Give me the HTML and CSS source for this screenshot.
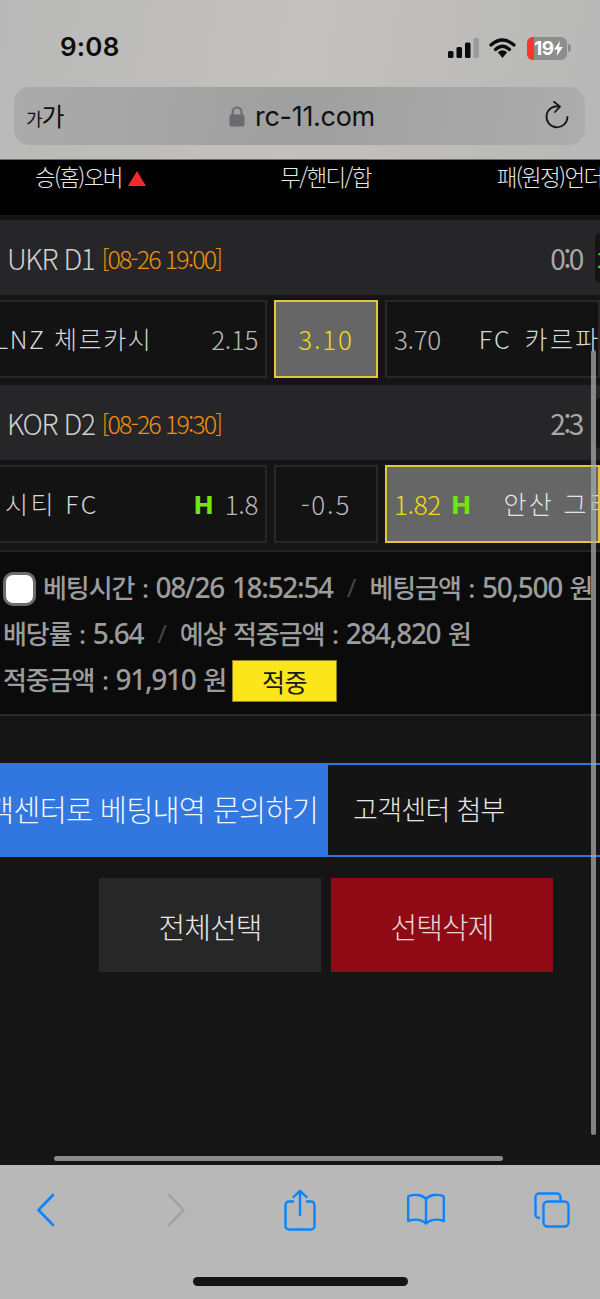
FILE: index.html
```html
<!DOCTYPE html>
<html lang="ko">
<head>
<meta charset="utf-8">
<title>rc-11.com</title>
<link rel="stylesheet" href="styles.css">
</head>
<body>
<div class="phone">
  <header class="top">
    <div class="status">
      <span class="clock">9:08</span>
      <div class="status-icons">
        <svg class="sig" width="31" height="20" viewBox="0 0 31 20"><rect x="0" y="13" width="5.5" height="7" rx="1.5" fill="#0a0a0a"/><rect x="8.5" y="9" width="5.5" height="11" rx="1.5" fill="#0a0a0a"/><rect x="17" y="4.5" width="5.5" height="15.5" rx="1.5" fill="#0a0a0a"/><rect x="25.5" y="0" width="5.5" height="20" rx="1.5" fill="#9b9b9b"/></svg>
        <svg class="wifi" width="27" height="20" viewBox="0 0 27 20"><path d="M2 7 Q13.5 -3 25 7" fill="none" stroke="#0a0a0a" stroke-width="3.2" stroke-linecap="round"/><path d="M6.5 11.5 Q13.5 5 20.5 11.5" fill="none" stroke="#0a0a0a" stroke-width="3.2" stroke-linecap="round"/><path d="M8.8 14.2 L13.5 20 L18.2 14.2 Q13.5 10.3 8.8 14.2Z" fill="#0a0a0a"/></svg>
        <div class="battery"><span class="charge"></span><span class="pct">19</span><svg class="bolt" width="9" height="15" viewBox="0 0 9 15"><path d="M6 0 L0 8.5 H3.6 L2.6 15 L9 6 H5 Z" fill="#fff"/></svg></div>
        <span class="nub"></span>
      </div>
    </div>
    <div class="urlbar">
      <span class="aa"><small>가</small>가</span>
      <div class="url">
        <svg width="16" height="21" viewBox="0 0 16 21"><path d="M3.5 9 V6 a4.5 4.5 0 0 1 9 0 V9" fill="none" stroke="#6b6b70" stroke-width="2"/><rect x="0.5" y="8.5" width="15" height="12" rx="2" fill="#6b6b70"/></svg>
        <span>rc-11.com</span>
      </div>
      <svg class="reload" width="26" height="30" viewBox="0 0 26 30"><path d="M15.5 5.6 A10.5 10.5 0 1 0 23.5 16" fill="none" stroke="#151515" stroke-width="1.8" stroke-linecap="round"/><path d="M10 0.8 L16 5.6 L11 11" fill="none" stroke="#151515" stroke-width="1.8" stroke-linecap="round" stroke-linejoin="round"/></svg>
    </div>
  </header>

  <main class="web">
    <div class="headrow">
      <span class="hd hd-home">승(홈)오버 <i class="tri"></i></span>
      <span class="hd hd-draw">무/핸디/합</span>
      <span class="hd hd-away">패(원정)언더</span>
    </div>

    <div class="league">
      <span class="lname">UKR D1</span><span class="ltime">[08-26 19:00]</span>
      <span class="score">0:0</span><span class="tag"><b>2</b></span>
    </div>
    <div class="bets">
      <div class="box b-home"><span class="team tight">LNZ 체르카시</span><span class="odd">2.15</span></div>
      <div class="box b-mid on"><span class="val">3.10</span></div>
      <div class="box b-away"><span class="odd">3.70</span><span class="team far">FC 카르파티</span></div>
    </div>

    <div class="league second">
      <span class="lname">KOR D2</span><span class="ltime">[08-26 19:30]</span>
      <span class="score">2:3</span><span class="tag"></span>
    </div>
    <div class="bets">
      <div class="box b-home"><span class="team shift">시티 FC</span><span class="h">H</span><span class="odd">1.8</span></div>
      <div class="box b-mid"><span class="val">-0.5</span></div>
      <div class="box b-away on"><span class="odd">1.82</span><span class="h after">H</span><span class="team near">안산 그리너스</span></div>
    </div>

    <section class="info">
      <p class="line"><span class="check"></span>베팅시간 :&nbsp;<span class="num">08/26 18:52:54</span><i class="sl">/</i>베팅금액 :&nbsp;<span class="num">50,500</span>&nbsp;원</p>
      <p class="line">배당률 :&nbsp;<span class="num">5.64</span><i class="sl">/</i>예상 적중금액 :&nbsp;<span class="num">284,820</span>&nbsp;원</p>
      <p class="line">적중금액 :&nbsp;<span class="num">91,910</span>&nbsp;원<span class="win">적중</span></p>
    </section>

    <div class="ask">
      <div class="ask-blue"><span>고객센터로 베팅내역 문의하기</span></div>
      <div class="ask-dark">고객센터 첨부</div>
    </div>

    <div class="actions">
      <div class="btn btn-all">전체선택</div>
      <div class="btn btn-del">선택삭제</div>
    </div>

    <span class="vbar"></span>
    <span class="hbar"></span>
  </main>

  <footer class="bottom">
    <div class="tools">
      <svg class="t-back" width="20" height="34" viewBox="0 0 20 34"><path d="M17 2 L2.5 17 L17 32" fill="none" stroke="#0a84ff" stroke-width="2.6" stroke-linecap="round" stroke-linejoin="round"/></svg>
      <svg class="t-fwd" width="20" height="34" viewBox="0 0 20 34"><path d="M3 2 L17.5 17 L3 32" fill="none" stroke="#a3a3a3" stroke-width="2.6" stroke-linecap="round" stroke-linejoin="round"/></svg>
      <svg class="t-share" width="32" height="42" viewBox="0 0 32 42"><path d="M10 12.5 H5 a3.5 3.5 0 0 0 -3.5 3.5 V37 a3.5 3.5 0 0 0 3.5 3.5 H27 a3.5 3.5 0 0 0 3.5 -3.5 V16 a3.5 3.5 0 0 0 -3.5 -3.5 H22" fill="none" stroke="#0a84ff" stroke-width="2.4"/><path d="M16 26 V2 M9.5 8 L16 1.8 L22.5 8" fill="none" stroke="#0a84ff" stroke-width="2.4" stroke-linecap="round" stroke-linejoin="round"/></svg>
      <svg class="t-book" width="38" height="32" viewBox="0 0 38 32"><path d="M19 6 C15 1.5 7 1 2 3 a1 1 0 0 0 -0.8 1 V28 C7 26 14 26 19 30.5 C24 26 31 26 36.8 28 V4 a1 1 0 0 0 -0.8 -1 C31 1 23 1.5 19 6 Z M19 6 V30" fill="none" stroke="#0a84ff" stroke-width="2.4" stroke-linejoin="round"/></svg>
      <svg class="t-tabs" width="36" height="36" viewBox="0 0 36 36"><path d="M6 26 H5 a3.5 3.5 0 0 1 -3.5 -3.5 V5 a3.5 3.5 0 0 1 3.5 -3.5 H23 a3.5 3.5 0 0 1 3.5 3.5 V9" fill="none" stroke="#0a84ff" stroke-width="2.4"/><rect x="9.5" y="9.5" width="25" height="25" rx="4" fill="none" stroke="#0a84ff" stroke-width="2.4"/></svg>
    </div>
    <span class="home"></span>
  </footer>
</div>
</body>
</html>
```

FILE: styles.css
```css
* { box-sizing: border-box; }
html, body { margin: 0; padding: 0; background: #151515; }
body { font-family: "Noto Sans CJK KR", "Noto Sans", sans-serif; }
p { margin: 0; }
i { font-style: normal; }

.phone { width: 600px; height: 1299px; display: flex; flex-direction: column; overflow: hidden; }

/* Safari top */
.top { height: 160px; flex: none; background: linear-gradient(100deg, #b9b9b9 0%, #c2c1bd 50%, #b8b8b8 100%); border-bottom: 1px solid #6a6a6a; padding: 0 14px; }
.status { height: 87px; display: flex; justify-content: space-between; align-items: flex-start; padding: 27px 15px 0 46px; }
.clock { font-family: Inter, "Noto Sans", sans-serif; font-weight: 600; font-size: 26px; line-height: 40px; height: 40px; color: #0d0d0d; letter-spacing: .2px; }
.status-icons { display: flex; align-items: center; height: 24px; margin-top: 9px; }
.sig { margin-right: 10px; }
.wifi { margin-right: 11px; }
.battery { width: 40px; height: 23px; border-radius: 6px; background: #8d8d8d; display: flex; align-items: center; overflow: hidden; color: #fff; font-family: Inter, sans-serif; font-weight: 700; font-size: 19px; }
.charge { width: 7px; height: 23px; background: #f8362c; flex: none; }
.pct { letter-spacing: -.5px; line-height: 23px; }
.nub { width: 3px; height: 8px; border-radius: 0 3px 3px 0; background: #8d8d8d; margin-left: 1px; }

.urlbar { height: 58px; margin-right: 1px; border-radius: 15px; background: linear-gradient(100deg, #ababab 0%, #9f9f9f 50%, #adadad 100%); display: flex; align-items: center; justify-content: space-between; padding: 0 15px 0 12px; }
.aa { font-size: 25px; line-height: 30px; color: #111; width: 50px; letter-spacing: -1px; white-space: nowrap; }
.aa small { font-size: 18px; }
.url { display: flex; align-items: center; gap: 10px; font-family: Inter, sans-serif; font-size: 27px; color: #111; margin-right: 16px; letter-spacing: -.3px; }
.reload { flex: none; }

/* Web content */
.web { flex: 1; position: relative; overflow: hidden; background: #151515; }
.headrow { height: 55px; background: #000; display: flex; color: #e6e6e6; font-size: 22.5px; font-weight: 300; line-height: 33px; letter-spacing: -1.7px; white-space: nowrap; }
.hd-home { margin-left: 35px; }
.hd-draw { margin-left: 134px; }
.hd-away { margin-left: 126px; }
.tri { display: inline-block; width: 0; height: 0; border: 9px solid transparent; border-top: 0; border-bottom: 15px solid #f12b2b; margin-left: 2px; }

.league { height: 75px; margin-top: 5px; background: #262628; display: flex; align-items: center; padding-left: 7px; white-space: nowrap; }
.league.second { margin-top: 7px; }
.lname { color: #cfcfcf; font-size: 28px; font-weight: 300; letter-spacing: -1.4px; }
.ltime { color: #f0900a; font-size: 25px; font-weight: 300; letter-spacing: -1.9px; margin-left: 7px; }
.score { margin-left: auto; margin-right: 13px; color: #a8a8a8; font-size: 28px; letter-spacing: -2.4px; }
.tag { width: 5px; height: 50px; background: #141414; border-radius: 5px 0 0 5px; overflow: hidden; font-size: 22px; line-height: 50px; padding-left: 2px; }
.tag b { color: #3ccb2a; font-weight: 400; }

.bets { height: 78px; margin: 5px 0 0 -10px; display: flex; gap: 7px; color: #b9b9b9; font-weight: 300; font-size: 25px; white-space: nowrap; }
.box { border: 2px solid #282828; background: #131313; display: flex; align-items: center; overflow: hidden; letter-spacing: 1.8px; padding-bottom: 2px; }
.box.on { border-color: #e8c33c; background: #666; color: #f0dc14; }
.b-home { width: 277px; padding-right: 7px; }
.b-mid { width: 104px; justify-content: center; }
.b-away { flex: 1; padding-left: 7px; }
.val { font-size: 26px; }
.team { color: #d8d8d8; margin-left: 7px; margin-right: auto; letter-spacing: 2.4px; }
.team.tight { margin-left: 3px; letter-spacing: 1.6px; }
.team.shift { margin-left: 13px; }
.team.far { margin-left: 38px; word-spacing: 3px; }
.team.near { margin-left: 33px; }
.box.on .team { color: #e4e4e4; }
.h { color: #6fe60e; font-family: Inter, sans-serif; font-weight: 800; font-size: 25px; margin: 4px 12px 0 0; letter-spacing: 0; }
.h.after { margin: 4px 0 0 11px; }
.odd { font-size: 26px; letter-spacing: -.4px; }

.info { height: 166px; margin-top: 7px; background: #0b0b0b; border-top: 2px solid #232323; border-bottom: 2px solid #2a2a2a; padding: 12px 0 0 3px; color: #9c9c9c; font-family: "Noto Sans", "Noto Sans CJK KR", sans-serif; font-size: 26px; font-weight: 500; letter-spacing: -1.1px; word-spacing: 2px; white-space: nowrap; }
.num { font-size: 28px; letter-spacing: -1.3px; }
.line { height: 46px; display: flex; align-items: center; }
.check { width: 33px; height: 34px; border-radius: 10px; background: #fff; border: 3px solid #6d6d6d; margin: 4px 7px 0 0; flex: none; }
.sl { color: #444; font-weight: 400; margin: 0 14px; }
.win { width: 105px; height: 42px; margin: 3px 0 0 6px; background: #fae61b; border: 1px solid #8d8120; color: #1a1a1a; font-size: 25px; font-weight: 400; display: flex; align-items: center; justify-content: center; letter-spacing: -.5px; }

.ask { height: 94px; margin-top: 47px; display: flex; background: #3277df; padding: 2px 0; white-space: nowrap; }
.ask-blue { width: 328px; overflow: hidden; display: flex; justify-content: flex-end; align-items: center; color: #f1f5fd; font-size: 29.5px; font-weight: 300; letter-spacing: -.8px; padding: 0 10px 4px 0; }
.ask-blue span { flex: none; }
.ask-dark { flex: 1; background: #141414; display: flex; align-items: center; padding: 0 0 4px 25px; color: #e8e8e8; font-size: 27px; font-weight: 300; letter-spacing: -.7px; }

.actions { display: flex; margin: 21px 0 0 99px; gap: 10px; }
.btn { width: 222px; height: 94px; padding-top: 2px; display: flex; align-items: center; justify-content: center; font-size: 29px; font-weight: 300; letter-spacing: -.9px; }
.btn-all { background: #272727; color: #e6e6e6; }
.btn-del { background: #900a15; color: #e9d5d6; }

.vbar { position: absolute; left: 591px; top: 190px; width: 5px; height: 785px; border-radius: 3px; background: rgba(170,170,170,.75); }
.hbar { position: absolute; left: 54px; top: 996px; width: 449px; height: 5px; border-radius: 3px; background: #8a8a8a; }

/* Safari bottom */
.bottom { height: 134px; flex: none; background: #b8b8b8; position: relative; }
.tools { position: relative; height: 100%; }
.tools svg { position: absolute; }
.t-back { left: 36px; top: 28px; }
.t-fwd { left: 166px; top: 28px; }
.t-share { left: 284px; top: 24px; }
.t-book { left: 407px; top: 28px; }
.t-tabs { left: 534px; top: 27px; }
.home { position: absolute; left: 193px; top: 112px; width: 215px; height: 9px; border-radius: 5px; background: #141414; }
```
